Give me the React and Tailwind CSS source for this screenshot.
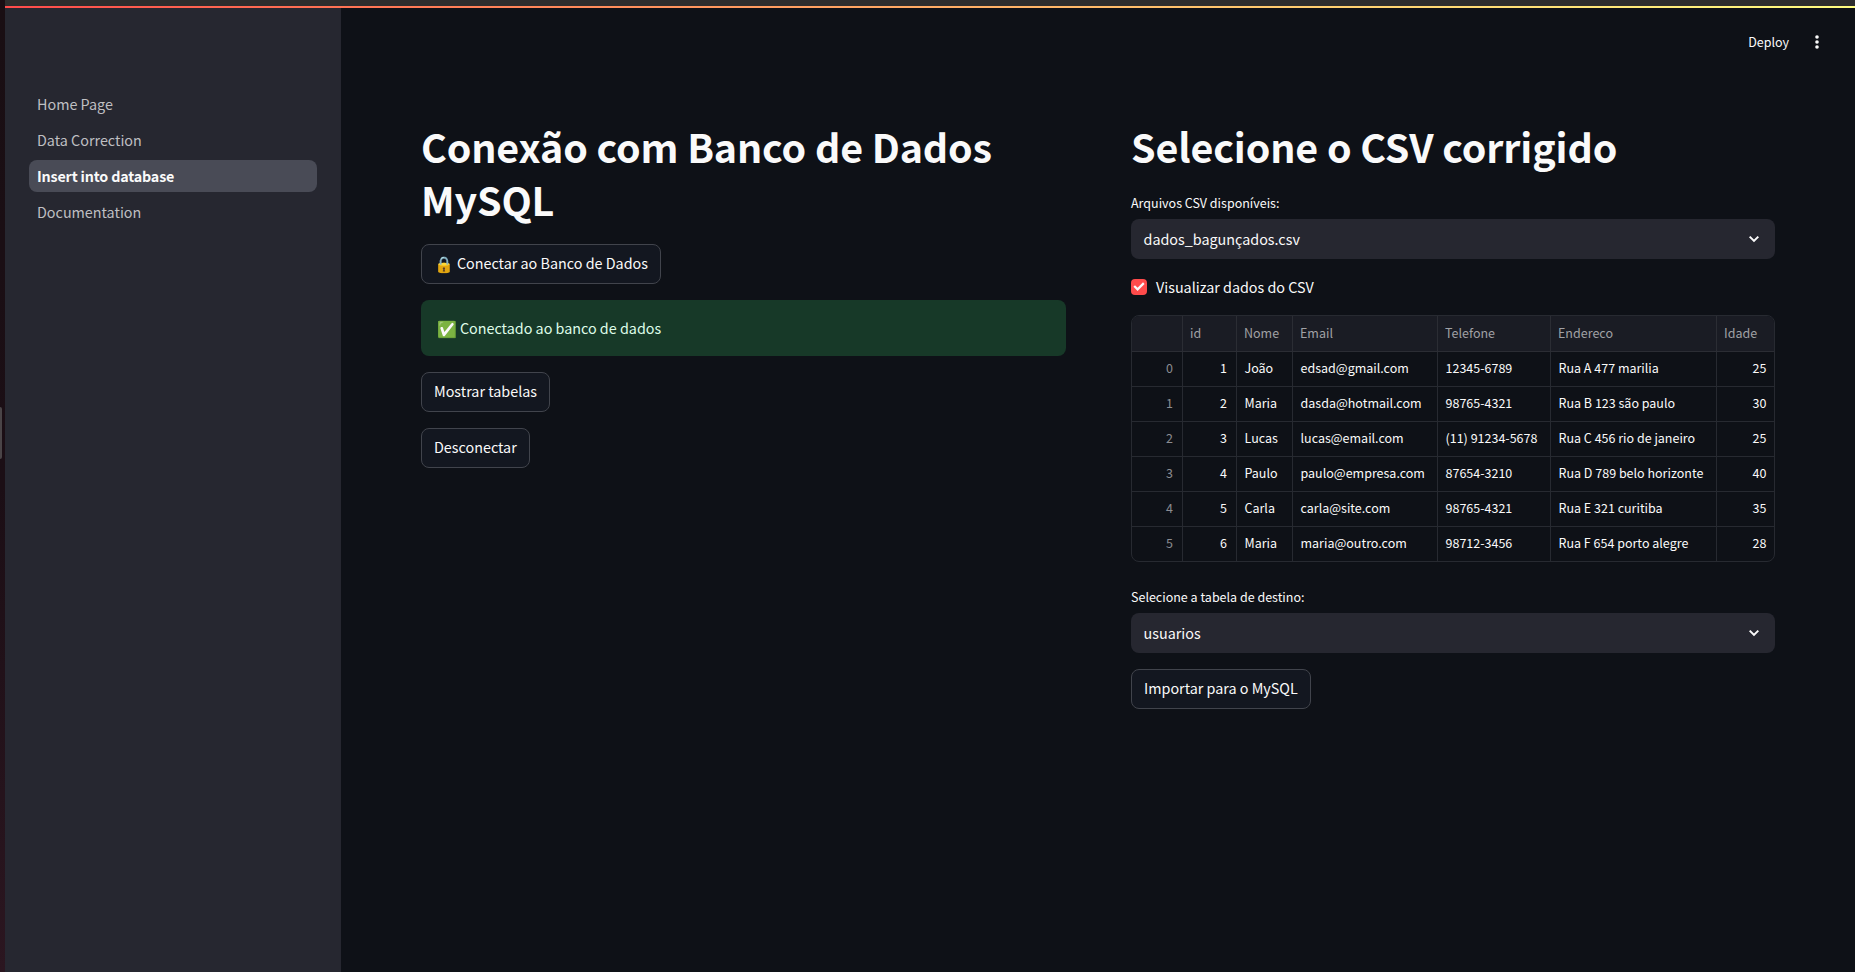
import React from "react";

const pages = ["Home Page", "Data Correction", "Insert into database", "Documentation"];

const columns = ["", "id", "Nome", "Email", "Telefone", "Endereco", "Idade"];

const rows = [
  ["0", "1", "João", "edsad@gmail.com", "12345-6789", "Rua A 477 marilia", "25"],
  ["1", "2", "Maria", "dasda@hotmail.com", "98765-4321", "Rua B 123 são paulo", "30"],
  ["2", "3", "Lucas", "lucas@email.com", "(11) 91234-5678", "Rua C 456 rio de janeiro", "25"],
  ["3", "4", "Paulo", "paulo@empresa.com", "87654-3210", "Rua D 789 belo horizonte", "40"],
  ["4", "5", "Carla", "carla@site.com", "98765-4321", "Rua E 321 curitiba", "35"],
  ["5", "6", "Maria", "maria@outro.com", "98712-3456", "Rua F 654 porto alegre", "28"],
];

const cellStyles = [
  "justify-end pr-[9px] text-[#8b8c91]",
  "justify-end pr-[9px]",
  "pl-[7.5px]",
  "pl-[7.5px]",
  "pl-[7.5px]",
  "pl-[7.5px]",
  "justify-end pr-[7.5px]",
];

function Sidebar() {
  return (
    <aside className="w-[336px] shrink-0 bg-[#262730] px-6 pt-[80px]">
      <nav className="flex flex-col gap-1">
        {pages.map((page) => (
          <a
            key={page}
            className={
              page === "Insert into database"
                ? "flex h-8 items-center rounded-lg bg-[#494b56] px-2 text-[14.3px] font-bold tracking-[-0.17px] text-[#fafafa]"
                : "flex h-8 items-center rounded-lg px-2 text-[14.35px] text-[#bfbfc2]"
            }
          >
            {page}
          </a>
        ))}
      </nav>
    </aside>
  );
}

function Button({ icon, children }) {
  return (
    <button className="flex h-10 items-center whitespace-nowrap rounded-lg border border-[#41444c] bg-[#131720] px-3 pb-0.5 text-[14.35px]">
      {icon && <span className="mr-[3px] text-[16px]">{icon}</span>}
      {children}
    </button>
  );
}

function Select({ label, value }) {
  return (
    <div className="flex flex-col">
      <label className="mb-1 flex h-6 items-center text-[12.5px]">{label}</label>
      <div className="flex h-10 items-center justify-between rounded-lg bg-[#262730] pl-[12.5px] pr-[9px] text-[14.35px]">
        <span>{value}</span>
        <svg viewBox="0 0 24 24" className="size-6" fill="none" stroke="#fafafa" strokeWidth="2">
          <path d="M7.7 9.6 12 13.9l4.3-4.3" />
        </svg>
      </div>
    </div>
  );
}

function DataTable() {
  return (
    <div className="overflow-hidden rounded-lg border border-[#272a31] text-[12.5px]">
      <div className="grid h-9 grid-cols-[51px_54px_56px_145px_113px_166px_57px] border-b border-[#2b2d34] bg-[#1a1c24] text-[#a0a1a5]">
        {columns.map((name, i) => (
          <div key={i} className="flex items-center border-r border-[#2b2d34] pl-[7px] last:border-r-0">
            {name}
          </div>
        ))}
      </div>
      {rows.map((row) => (
        <div
          key={row[0]}
          className="grid h-[35px] grid-cols-[51px_54px_56px_145px_113px_166px_57px] border-b border-[#272a31] last:h-[34px] last:border-b-0"
        >
          {row.map((cell, i) => (
            <div
              key={i}
              className={
                "flex items-center whitespace-nowrap border-r border-[#272a31] pb-[1.5px] last:border-r-0 " +
                cellStyles[i]
              }
            >
              {cell}
            </div>
          ))}
        </div>
      ))}
    </div>
  );
}

export default function App() {
  return (
    <div className="flex h-[972px] w-[1855px] overflow-hidden bg-[#0e1117] font-['Noto_Sans_CJK_SC','Noto_Color_Emoji',sans-serif] leading-none text-[#fafafa]">
      <div className="flex w-[5px] shrink-0 items-center bg-linear-to-b from-[#190e13] via-[#1b0e15] to-[#2b1620]">
        <div className="mt-[-106px] h-[52px] w-[2px] rounded-r-sm bg-[#4a4447]" />
      </div>
      <div className="flex min-w-0 flex-1 flex-col">
        <div className="h-1.5 shrink-0 bg-[#2d2d2d]" />
        <div className="h-0.5 shrink-0 bg-linear-to-r from-[#ff4b4b] to-[#fffd80]" />
        <div className="flex flex-1">
          <Sidebar />
          <div className="flex flex-1 flex-col">
            <header className="flex h-[68px] shrink-0 items-center justify-end pr-[28px] text-[12.5px]">
              <span>Deploy</span>
              <svg viewBox="0 0 20 20" className="ml-[18px] size-5" fill="#fafafa">
                <circle cx="10" cy="5" r="1.8" />
                <circle cx="10" cy="10" r="1.8" />
                <circle cx="10" cy="15" r="1.8" />
              </svg>
            </header>
            <main className="grid grid-cols-[645px_644px] gap-[65px] pl-20 pt-[43px]">
              <section className="flex flex-col items-start">
                <h1 className="mb-[19px] text-[39.4px] font-bold leading-[53px] tracking-[-0.13px]">
                  Conexão com Banco de Dados MySQL
                </h1>
                <div className="flex w-full flex-col items-start gap-4">
                  <Button icon="🔒">Conectar ao Banco de Dados</Button>
                  <div className="flex h-14 w-full items-center rounded-lg bg-[#173928] px-4 text-[14.35px] text-[#dffde9]">
                    <span className="mr-[3px] text-[16px]">✅</span>
                    Conectado ao banco de dados
                  </div>
                  <Button>Mostrar tabelas</Button>
                  <Button>Desconectar</Button>
                </div>
              </section>
              <section className="flex flex-col">
                <h1 className="mb-[19px] text-[39.4px] font-bold leading-[53px] tracking-[-0.13px]">
                  Selecione o CSV corrigido
                </h1>
                <Select label="Arquivos CSV disponíveis:" value="dados_bagunçados.csv" />
                <label className="mb-4 mt-4 flex h-6 items-center gap-[9px] text-[14.35px]">
                  <span className="flex size-4 items-center justify-center rounded bg-[#ff4b4b]">
                    <svg viewBox="0 0 17 13" className="w-3" fill="#fafafa">
                      <path d="M6.5 12.6.6 6.7l2.2-2.2 3.7 3.7L14.2.5l2.2 2.2z" />
                    </svg>
                  </span>
                  Visualizar dados do CSV
                </label>
                <DataTable />
                <div className="mb-4 mt-[23px]">
                  <Select label="Selecione a tabela de destino:" value="usuarios" />
                </div>
                <div className="flex">
                  <Button>Importar para o MySQL</Button>
                </div>
              </section>
            </main>
          </div>
        </div>
      </div>
    </div>
  );
}
